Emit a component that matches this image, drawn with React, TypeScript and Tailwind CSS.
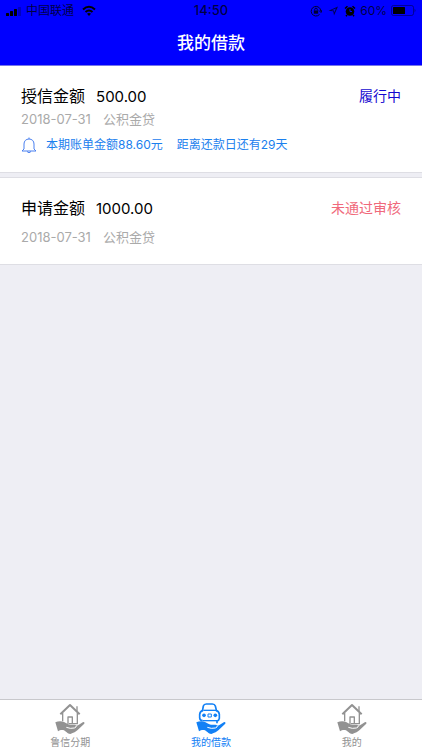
import type { ReactNode } from "react";

type Loan = {
  label: string;
  amount: string;
  date: string;
  product: string;
  status: string;
  statusClass: string;
  bill?: string;
  due?: string;
};

const loans: Loan[] = [
  {
    label: "授信金额",
    amount: "500.00",
    date: "2018-07-31",
    product: "公积金贷",
    status: "履行中",
    statusClass: "text-[#1408d0]",
    bill: "本期账单金额88.60元",
    due: "距离还款日还有29天",
  },
  {
    label: "申请金额",
    amount: "1000.00",
    date: "2018-07-31",
    product: "公积金贷",
    status: "未通过审核",
    statusClass: "text-[#f0697b]",
  },
];

function Hand() {
  return (
    <>
      <path
        d="M1 58 C9 54 19 53 27 57 C33 60 38 64 45 65 L58 65 C66 66 68 69 69 67 L81 59 C86 55 91 58 87 63 L68 81 C61 88 56 88 51 91 C45 95 40 92 35 88 L27 82 C20 80 14 82 9 85 Z"
        fill="currentColor"
      />
      <path d="M34 73 Q46 78 58 75 Q65 73 64 67" stroke="white" strokeWidth="3" fill="none" />
    </>
  );
}

function HouseIcon() {
  return (
    <svg viewBox="0 0 90 93" className="h-[31px] w-[30px] shrink-0" fill="none" aria-hidden="true">
      <g stroke="currentColor" strokeWidth="4" strokeLinejoin="round">
        <path d="M16 34 L45 6 L74 34" strokeWidth="6" />
        <path d="M66 10 V24" />
        <path d="M23 30 V55 M67 30 V62 H42" />
        <path d="M39 63 V42 H52 V62" />
      </g>
      <Hand />
    </svg>
  );
}

function CarIcon() {
  return (
    <svg viewBox="0 0 90 93" className="h-[31px] w-[30px] shrink-0" fill="none" aria-hidden="true">
      <g stroke="currentColor" strokeWidth="4" strokeLinejoin="round">
        <path d="M19 25 L22 9 Q24 3 31 3 H49 Q56 3 58 9 L62 25" strokeWidth="5" />
        <path d="M22 22 H60" />
        <path d="M20 53 Q11 52 11 44 V34 Q12 25 20 23 M61 23 Q69 25 70 34 V46 Q69 53 63 54 V61" strokeWidth="5" />
        <path d="M20 53 H63" />
        <path d="M36 33 V42 H46 V33 Z" strokeWidth="3" />
      </g>
      <circle cx="24" cy="37" r="5.500" fill="currentColor" />
      <circle cx="58" cy="37" r="5.500" fill="currentColor" />
      <Hand />
    </svg>
  );
}

function BellIcon() {
  return (
    <svg viewBox="0 0 16 17" className="h-[17px] w-4 shrink-0" fill="none" stroke="#4a80f0" aria-hidden="true">
      <path d="M8 0.500 V2 M3 12 V7 C3 4 5 2 8 2 S13 4 13 7 V12 L15 14 H1 Z" strokeLinejoin="round" />
      <path d="M6 14.500 Q8 17 10 14.500" />
    </svg>
  );
}

function StatusBar() {
  return (
    <div className="grid h-[22px] grid-cols-[1fr_auto_1fr] items-center px-1.5 text-xs text-black/75">
      <div className="flex items-center gap-1">
        <svg viewBox="0 0 16 10" className="h-2.5 w-4" fill="black" aria-hidden="true">
          <rect x="0" y="7" width="3" height="3" rx="0.500" />
          <rect x="4" y="5" width="3" height="5" rx="0.500" />
          <rect x="8" y="3" width="3" height="7" rx="0.500" />
          <rect x="12" y="1" width="3" height="9" rx="0.500" opacity="0.25" />
        </svg>
        <span>中国联通</span>
        <svg viewBox="0 0 14 11" className="ml-1 h-3 w-3.5" fill="none" stroke="black" strokeWidth="2" aria-hidden="true">
          <path d="M1 4 Q7 -1.500 13 4" />
          <path d="M3.500 6.500 Q7 3.500 10.500 6.500" />
          <path d="M7 10.500 L5 8.300 Q7 6.800 9 8.300 Z" fill="black" stroke="none" />
        </svg>
      </div>
      <span className="text-[13px] font-medium">14:50</span>
      <div className="flex items-center justify-end">
        <svg viewBox="0 0 12 12" className="mr-1.5 h-3 w-3" fill="none" stroke="black" opacity="0.8" aria-hidden="true">
          <path d="M9.500 9.500 A4.800 4.800 0 1 1 10.800 6" />
          <path d="M9 5.500 L11 7.500 L12 5" />
          <rect x="3.800" y="5.500" width="4.400" height="3.200" fill="black" stroke="none" />
          <path d="M4.700 5.500 V4.500 A1.300 1.300 0 0 1 7.300 4.500 V5.500" />
        </svg>
        <svg viewBox="0 0 10 10" className="mr-1.5 h-2.5 w-2.5" fill="black" opacity="0.7" aria-hidden="true">
          <path fillRule="evenodd" d="M10 0.500 L6 9.500 L5.300 5.200 L0.500 4.800 Z M7.800 2.400 L3.500 4.200 L6 4.500 L6.500 6.500 Z" />
        </svg>
        <svg viewBox="0 0 12 12" className="mr-1 h-3 w-3" aria-hidden="true">
          <circle cx="6" cy="6.500" r="4.300" fill="black" />
          <path d="M1 3.500 L3.500 1.200 M8.500 1.200 L11 3.500 M3 10 L2 11.300 M9 10 L10 11.300" stroke="black" strokeWidth="1.500" />
          <path d="M6 4 V6.500 H8" stroke="#0000ff" fill="none" />
        </svg>
        <span className="mr-1">60%</span>
        <svg viewBox="0 0 25 12" className="h-3 w-[25px]" fill="none" aria-hidden="true">
          <rect x="0.500" y="0.500" width="22" height="10" rx="2" stroke="black" opacity="0.4" />
          <rect x="2" y="2" width="12" height="7" rx="0.500" fill="black" />
          <path d="M23.500 3.500 Q25.500 5.500 23.500 7.500 Z" fill="black" opacity="0.4" />
        </svg>
      </div>
    </div>
  );
}

function LoanCard({ loan }: { loan: Loan }) {
  return (
    <article className="border-y border-[#dedee4] bg-white px-[21px] pt-[18px] pb-4 first:border-t-0">
      <div className="flex h-6 items-center justify-between leading-6">
        <h2 className="flex items-baseline gap-[11px] text-base text-black">
          <span>{loan.label}</span>
          <span className="text-[15px]">{loan.amount}</span>
        </h2>
        <span className={`text-sm ${loan.statusClass}`}>{loan.status}</span>
      </div>
      <p className={`flex gap-3 text-[13px] leading-[22px] text-[#aaaaaa] ${loan.bill ? "" : "mt-1.5"}`}>
        <span>{loan.date}</span>
        <span>{loan.product}</span>
      </p>
      {loan.bill && (
        <p className="mt-1 flex items-center gap-[9px] text-xs leading-[22px] text-[#1b80ee]">
          <BellIcon />
          <span className="flex gap-3.5">
            <span>{loan.bill}</span>
            <span>{loan.due}</span>
          </span>
        </p>
      )}
    </article>
  );
}

function Tab({ label, icon, active = false }: { label: string; icon: ReactNode; active?: boolean }) {
  return (
    <button
      type="button"
      aria-current={active ? "page" : undefined}
      className={`flex flex-1 flex-col items-center pt-[3px] text-[10px] leading-4 ${active ? "text-[#1280f5]" : "text-[#929292]"}`}
    >
      {icon}
      <span>{label}</span>
    </button>
  );
}

export default function App() {
  return (
    <div className="flex min-h-screen flex-col bg-[#eeeef4] font-['Inter','Noto_Sans_CJK_SC',sans-serif]">
      <header className="border-b border-[#7777e8] bg-[#0000ff]">
        <StatusBar />
        <h1 className="flex h-[43px] items-center justify-center text-[17px] font-medium text-white">我的借款</h1>
      </header>
      <main className="flex flex-1 flex-col gap-1">
        {loans.map((loan) => (
          <LoanCard key={loan.label} loan={loan} />
        ))}
      </main>
      <nav className="flex h-[51px] border-t border-[#c8c8cc] bg-white">
        <Tab label="鲁信分期" icon={<HouseIcon />} />
        <Tab label="我的借款" icon={<CarIcon />} active />
        <Tab label="我的" icon={<HouseIcon />} />
      </nav>
    </div>
  );
}
